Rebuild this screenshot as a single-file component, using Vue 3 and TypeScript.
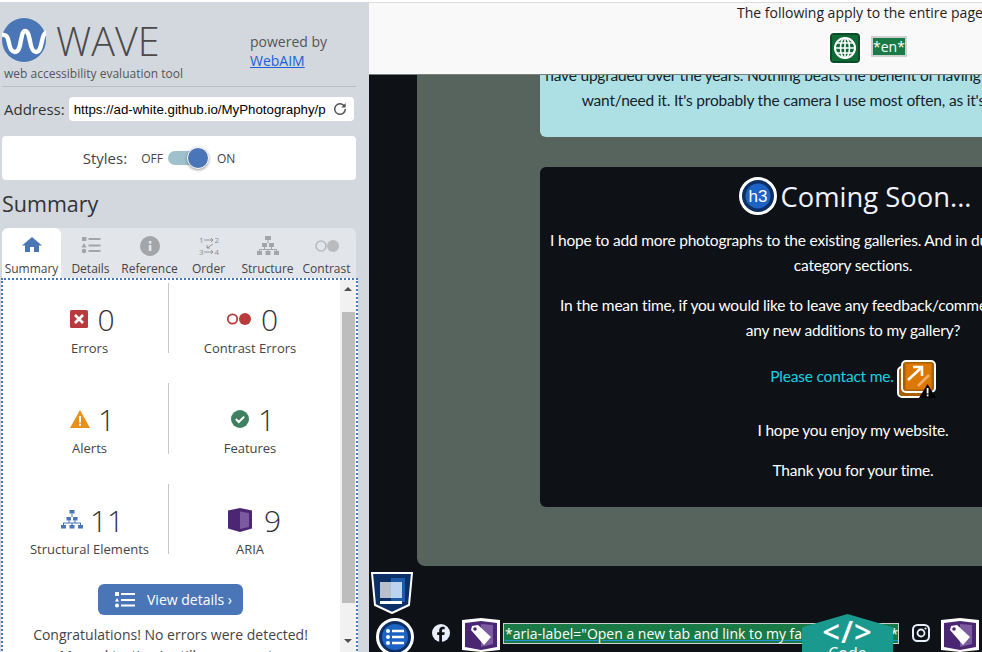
<script setup lang="ts">
const tabs = [
  { label: "Summary", icon: "home" },
  { label: "Details", icon: "list" },
  { label: "Reference", icon: "info" },
  { label: "Order", icon: "order" },
  { label: "Structure", icon: "tree" },
  { label: "Contrast", icon: "contrast" },
];

const stats = [
  { label: "Errors", value: 0, icon: "error" },
  { label: "Contrast Errors", value: 0, icon: "pair" },
  { label: "Alerts", value: 1, icon: "alert" },
  { label: "Features", value: 1, icon: "feature" },
  { label: "Structural Elements", value: 11, icon: "tree" },
  { label: "ARIA", value: 9, icon: "book" },
];

const comingSoon = [
  "I hope to add more photographs to the existing galleries. And in due time, I plan to add more",
  "category sections.",
];
const feedback = [
  "In the mean time, if you would like to leave any feedback/comments, or have requests for",
  "any new additions to my gallery?",
];
</script>

<template>
  <div class="page">
    <aside class="wave">
      <div class="brand">
        <div class="brand-left">
          <div class="logo-row">
            <svg class="logo" viewBox="0 0 44 44">
              <circle cx="22" cy="22" r="22" fill="#4a76b8" />
              <path d="M0 17c5-1 6 3 7 8 1 6 3 9 6 9 4 0 5-6 6-12 1-5 2-9 4-9 3 0 4 5 5 10 1 6 3 11 6 11 4 0 5-6 6-11 1-5 2-8 4-8" fill="none" stroke="#fff" stroke-width="4.4" />
            </svg>
            <span class="wave-name">WAVE</span>
          </div>
          <div class="tagline">web accessibility evaluation tool</div>
        </div>
        <div class="powered">powered by<br /><a href="#">WebAIM</a></div>
      </div>
      <div class="address">
        <label>Address:</label>
        <div class="url">
          <span>https://ad-white.github.io/MyPhotography/p</span>
          <svg class="reload" viewBox="0 0 14 14">
            <path d="M11.6 4.4A5.3 5.3 0 1 0 12.3 7" fill="none" stroke="#555" stroke-width="1.5" />
            <path d="M12.6 1v4.4H8.2z" fill="#555" />
          </svg>
        </div>
      </div>
      <div class="styles-card">
        <span class="styles-label">Styles:</span>
        <span class="small">OFF</span>
        <span class="toggle"><span class="knob"></span></span>
        <span class="small">ON</span>
      </div>
      <h1>Summary</h1>
      <div class="tabs">
        <div v-for="(tab, i) in tabs" :key="tab.label" class="tab" :class="{ active: i === 0 }">
          <svg class="tab-icon" viewBox="0 0 28 20">
            <path v-if="tab.icon === 'home'" d="M14 1 4 9.5h3V16h5v-5h4v5h5V9.5h3z" fill="#4a76b8" />
            <g v-else-if="tab.icon === 'list'" fill="#a3a5a8">
              <rect x="5" y="1" width="4.500" height="4" />
              <path d="M7 7l2.600 4.500H4.400z" />
              <circle cx="7" cy="15" r="2.300" />
              <rect x="11.500" y="2" width="12" height="2" />
              <rect x="11.500" y="8.500" width="12" height="2" />
              <rect x="11.500" y="14" width="12" height="2" />
            </g>
            <g v-else-if="tab.icon === 'info'">
              <circle cx="14" cy="10" r="10" fill="#a3a5a8" />
              <rect x="12.800" y="9" width="2.600" height="6" fill="#e2e5e9" />
              <rect x="12.800" y="5" width="2.600" height="2.600" fill="#e2e5e9" />
            </g>
            <g v-else-if="tab.icon === 'order'" fill="none" stroke="#8c8e91" stroke-width="0.900">
              <text x="4" y="7" class="order-digit">1</text>
              <text x="19.500" y="7" class="order-digit">2</text>
              <text x="4" y="19" class="order-digit">3</text>
              <text x="19.500" y="19" class="order-digit">4</text>
              <path d="M9 4h9m-2-2 2 2-2 2M9 16h9m-2-2 2 2-2 2M18 8l-6 4m0-3v3h3" />
            </g>
            <g v-else-if="tab.icon === 'tree'" fill="#a3a5a8">
              <rect x="11" y="0" width="6" height="4" />
              <rect x="8" y="7" width="5" height="4" />
              <rect x="15" y="7" width="5" height="4" />
              <rect x="3" y="15" width="5" height="4" />
              <rect x="11.500" y="15" width="5" height="4" />
              <rect x="20" y="15" width="5" height="4" />
              <path d="M13.500 4h1v3h-1zM5 13h18v2h-1v-1H6v1H5zM10 11h1v2h-1zM17 11h1v2h-1zM13.500 13h1v2h-1z" />
            </g>
            <g v-else>
              <circle cx="8" cy="10" r="5" fill="none" stroke="#b9bbbe" stroke-width="1.600" />
              <circle cx="20" cy="10" r="6" fill="#b9bbbe" />
            </g>
          </svg>
          <span>{{ tab.label }}</span>
        </div>
      </div>
      <div class="panel">
        <div class="panel-body">
          <div class="stats">
            <div v-for="stat in stats" :key="stat.label" class="stat">
              <div class="stat-main" :class="stat.icon">
                <svg class="stat-icon" viewBox="0 0 26 24">
                  <g v-if="stat.icon === 'error'">
                    <rect x="4" y="3" width="18" height="18" rx="1.500" fill="#b93a3c" />
                    <path d="M9 8l8 8m0-8-8 8" stroke="#fff" stroke-width="2.600" />
                  </g>
                  <g v-else-if="stat.icon === 'pair'">
                    <circle cx="6.500" cy="12" r="4.700" fill="none" stroke="#b93a3c" stroke-width="1.800" />
                    <circle cx="19" cy="12" r="6" fill="#b93a3c" />
                  </g>
                  <g v-else-if="stat.icon === 'alert'">
                    <path d="M13 3 23 21H3z" fill="#e5911c" />
                    <rect x="12" y="9" width="2" height="6.500" fill="#fff" />
                    <rect x="12" y="16.700" width="2" height="2.100" fill="#fff" />
                  </g>
                  <g v-else-if="stat.icon === 'feature'">
                    <circle cx="13" cy="12" r="9" fill="#3f8060" />
                    <path d="M8.800 12l3 3 5.400-5.400" fill="none" stroke="#fff" stroke-width="2" />
                  </g>
                  <g v-else-if="stat.icon === 'tree'" fill="#4a76b8">
                    <rect x="10.500" y="2" width="5" height="3.500" />
                    <rect x="7.500" y="9" width="4.500" height="3.500" />
                    <rect x="14" y="9" width="4.500" height="3.500" />
                    <rect x="2" y="17" width="5" height="3.500" />
                    <rect x="10.500" y="17" width="5" height="3.500" />
                    <rect x="19" y="17" width="5" height="3.500" />
                    <path d="M12.500 5.500h1V9h-1zM4 14.500h18V17h-1v-1.500H5V17H4zM9.500 12.500h1v2h-1zM15.500 12.500h1v2h-1zM12.500 14.500h1V17h-1z" />
                  </g>
                  <g v-else>
                    <path d="M1 2.500 13 0l12 2.500v18L13 24 1 20.500z" fill="#4b2673" />
                    <path d="M13 3.500 22 5v14l-9 2z" fill="#7b5aa0" />
                  </g>
                </svg>
                <span class="number">{{ stat.value }}</span>
              </div>
              <div class="stat-label">{{ stat.label }}</div>
            </div>
          </div>
          <button class="details-btn">
            <svg viewBox="0 0 20 16" width="20" height="16">
              <rect x="0" y="0" width="4" height="4" fill="#fff" />
              <path d="M2 6l2 3.400H0z" fill="#fff" />
              <circle cx="2" cy="13.500" r="2" fill="#fff" />
              <rect x="6" y="1" width="14" height="2" fill="#fff" />
              <rect x="6" y="7" width="14" height="2" fill="#fff" />
              <rect x="6" y="12.500" width="14" height="2" fill="#fff" />
            </svg>
            <span>View details ›</span>
          </button>
          <p class="congrats">Congratulations! No errors were detected!<br />Manual testing is still necessary to</p>
        </div>
        <div class="scrollbar">
          <span class="arrow up"></span>
          <span class="thumb"></span>
          <span class="arrow down"></span>
        </div>
      </div>
    </aside>

    <main class="site">
      <div class="page-notes">
        <div class="notes-title">The following apply to the entire page</div>
        <div class="notes-row">
          <svg class="globe" viewBox="0 0 34 34">
            <rect x="1" y="1" width="32" height="32" rx="5" fill="#0b4d29" stroke="#fff" stroke-width="2" />
            <rect x="4" y="4" width="26" height="26" fill="#0f6a38" />
            <circle cx="17" cy="17" r="10" fill="none" stroke="#fff" stroke-width="2" />
            <ellipse cx="17" cy="17" rx="4.500" ry="10" fill="none" stroke="#fff" stroke-width="1.600" />
            <path d="M17 7v20M7 17h20M8.500 12h17M8.500 22h17" stroke="#fff" stroke-width="1.600" />
          </svg>
          <span class="wave-tag en-tag">*en*</span>
        </div>
      </div>

      <div class="content">
        <section class="sheet">
          <div class="card light">
            <p>have upgraded over the years. Nothing beats the benefit of having a camera on you when you</p>
            <p>want/need it. It's probably the camera I use most often, as it's always in my pocket.</p>
          </div>
          <div class="card dark">
            <h3>
              <svg class="h3-badge" viewBox="0 0 38 38">
                <circle cx="19" cy="19" r="17.500" fill="#0c2f66" stroke="#fff" stroke-width="3" />
                <circle cx="19" cy="19" r="12.500" fill="#1d63c4" />
                <text x="19" y="25" class="h3-text">h3</text>
              </svg>
              Coming Soon...
            </h3>
            <p v-for="line in comingSoon" :key="line">{{ line }}</p>
            <div class="spacer"></div>
            <p v-for="line in feedback" :key="line">{{ line }}</p>
            <div class="contact">
              <a href="#">Please contact me.</a>
              <svg class="external" viewBox="0 0 39 38">
                <rect x="1" y="7" width="30" height="30" rx="4" fill="#a85f00" stroke="#fff" stroke-width="2" />
                <rect x="5" y="1" width="33" height="31" rx="4" fill="#a85f00" stroke="#fff" stroke-width="2" />
                <rect x="8.500" y="3.500" width="26" height="26" fill="#dc7800" />
                <path d="M11 20 24 8M16 7h9v9" fill="none" stroke="#fff" stroke-width="2.500" />
                <path d="M21 26 32 15" stroke="#f0b070" stroke-width="2.500" />
                <path d="M30.500 24 39 38H22z" fill="#000" />
                <rect x="29.700" y="28" width="1.800" height="5.500" fill="#fff" />
                <rect x="29.700" y="34.500" width="1.800" height="1.800" fill="#fff" />
              </svg>
            </div>
            <p class="enjoy">I hope you enjoy my website.</p>
            <p class="thanks">Thank you for your time.</p>
          </div>
        </section>

        <footer class="foot">
          <svg class="list-badge" viewBox="0 0 38 38">
            <circle cx="19" cy="19" r="17.500" fill="#0c2f66" stroke="#fff" stroke-width="3" />
            <circle cx="19" cy="19" r="13" fill="#1d63c4" />
            <circle cx="12" cy="13" r="2" fill="#fff" />
            <circle cx="12" cy="19" r="2" fill="#fff" />
            <circle cx="12" cy="25" r="2" fill="#fff" />
            <path d="M16 13h12M16 19h12M16 25h12" stroke="#fff" stroke-width="2.400" />
          </svg>
          <svg class="social fb" viewBox="0 0 18 18">
            <circle cx="9" cy="9" r="9" fill="#e8eefb" />
            <path d="M10 18v-7h2.300l.4-2.700H10V6.600c0-.8.4-1.300 1.400-1.300h1.300V3c-.5-.1-1.300-.2-2-.2-2.100 0-3.500 1.200-3.500 3.500v2H5.200V11h2v7z" fill="#0e1116" />
          </svg>
          <svg class="tag" viewBox="0 0 38 34">
            <path d="M0 2 19 0l19 2v30l-19 2-19-2z" fill="#fff" />
            <path d="M3 5 19 3l16 2v24l-16 3-16-3z" fill="#4b2673" />
            <path d="M19 6l12 1v19l-12 3z" fill="#7b5aa0" />
            <path d="M9 12l1-4 6-1 13 12-7 8z" fill="#fff" />
            <circle cx="13" cy="11" r="1.800" fill="#4b2673" />
          </svg>
          <span class="wave-tag aria-tag">*aria-label="Open a new tab and link to my facebook page"*</span>
          <svg class="social ig" viewBox="0 0 18 18">
            <rect x="1" y="1" width="16" height="16" rx="4.500" fill="none" stroke="#e8eefb" stroke-width="2" />
            <circle cx="9" cy="9" r="3.500" fill="none" stroke="#e8eefb" stroke-width="1.800" />
            <circle cx="13.500" cy="4.500" r="1.100" fill="#e8eefb" />
          </svg>
          <svg class="tag" viewBox="0 0 38 34">
            <path d="M0 2 19 0l19 2v30l-19 2-19-2z" fill="#fff" />
            <path d="M3 5 19 3l16 2v24l-16 3-16-3z" fill="#4b2673" />
            <path d="M19 6l12 1v19l-12 3z" fill="#7b5aa0" />
            <path d="M9 12l1-4 6-1 13 12-7 8z" fill="#fff" />
            <circle cx="13" cy="11" r="1.800" fill="#4b2673" />
          </svg>
        </footer>

        <svg class="structure-badge" viewBox="0 0 42 42">
          <path d="M1 1h40l-3 32-17 8-17-8z" fill="#0c2f66" stroke="#fff" stroke-width="2" />
          <path d="M20 6h14v24H20z" fill="#1d5ba8" />
          <rect x="9" y="10" width="11" height="16" fill="#b8c0cc" />
          <rect x="20" y="10" width="11" height="16" fill="#bcd3f0" />
          <rect x="9" y="29" width="22" height="3" fill="#fff" />
        </svg>

        <div class="code-badge">
          <span class="code-mark">&lt;/&gt;</span>
          <span class="code-word">Code</span>
        </div>
      </div>
    </main>
  </div>
</template>

<style>
html,
body {
  margin: 0;
  background: #fff;
  overflow: hidden;
}
</style>

<style scoped>
.page {
  display: grid;
  grid-template-columns: 369px 613px;
  height: 652px;
  overflow: hidden;
  font-family: "Open Sans", sans-serif;
  padding-top: 2px;
  box-sizing: border-box;
}

.wave {
  background: #d3d8df;
  padding: 0 0 0 2px;
  height: 650px;
  overflow: hidden;
  color: #333;
}
.brand {
  display: flex;
  width: 354px;
  height: 84px;
  border-bottom: 1px solid #b9bdc1;
  box-sizing: content-box;
}
.brand-left {
  width: 248px;
}
.logo-row {
  display: flex;
  align-items: center;
  height: 60px;
  padding-top: 16px;
  box-sizing: border-box;
}
.logo {
  width: 44px;
  height: 44px;
}
.wave-name {
  font-size: 39.500px;
  font-weight: 300;
  color: #4a4a4a;
  margin: 1px 0 0 10px;
  line-height: 44px;
}
.tagline {
  font-size: 12px;
  color: #555;
  margin: 3px 0 0 2px;
  white-space: nowrap;
}
.powered {
  font-size: 14px;
  line-height: 19px;
  color: #555;
  padding-top: 30px;
}
.powered a {
  color: #1a5fd6;
}
.address {
  display: flex;
  align-items: center;
  height: 24px;
  margin-top: 10px;
  font-size: 15px;
  padding-left: 2px;
}
.url {
  display: flex;
  align-items: center;
  justify-content: space-between;
  margin-left: 4px;
  width: 285px;
  height: 24px;
  padding: 0 7px 0 5px;
  box-sizing: border-box;
  background: #fff;
  border-radius: 4px;
  font-family: "Liberation Sans", sans-serif;
  font-size: 13.300px;
  color: #000;
  white-space: nowrap;
}
.reload {
  width: 14px;
  height: 14px;
  flex: none;
}
.styles-card {
  display: flex;
  align-items: center;
  justify-content: center;
  width: 354px;
  height: 44px;
  margin-top: 15px;
  background: #fff;
  border-radius: 4px;
  padding-right: 40px;
  box-sizing: border-box;
}
.styles-label {
  font-size: 15px;
  margin-right: 14px;
  color: #444;
}
.small {
  font-size: 12px;
  color: #444;
}
.toggle {
  position: relative;
  width: 37px;
  height: 14px;
  margin: 0 12px 0 5px;
  background: #9fc1cc;
  border-radius: 7px;
}
.knob {
  position: absolute;
  right: -4px;
  top: -4.500px;
  width: 20px;
  height: 20px;
  background: #4a76b8;
  border: 1px solid #fff;
  border-radius: 50%;
  box-shadow: 0 1px 3px rgba(0, 0, 0, 0.4);
}
h1 {
  font-size: 21.500px;
  font-weight: 400;
  line-height: 28px;
  margin: 10px 0 0 0;
  color: #333;
}
.tabs {
  display: grid;
  grid-template-columns: repeat(6, 59px);
  width: 354px;
  height: 50px;
  margin-top: 10px;
  background: #e2e5e9;
  border-radius: 6px 6px 0 0;
}
.tab {
  display: flex;
  flex-direction: column;
  align-items: center;
  padding-top: 8px;
  box-sizing: border-box;
  font-size: 12px;
  line-height: 16px;
  color: #444;
  white-space: nowrap;
}
.tab.active {
  background: #fff;
  border-radius: 6px 6px 0 0;
}
.tab-icon {
  width: 28px;
  height: 20px;
  margin-bottom: 5px;
}
.order-digit {
  font-family: "Open Sans", sans-serif;
  font-size: 8px;
  fill: #8c8e91;
  stroke: none;
}
.panel {
  display: flex;
  width: 357px;
  height: 376px;
  margin-left: -1px;
  background: #fff;
  border: 2px dotted #4a76b8;
  box-sizing: border-box;
  overflow: hidden;
}
.panel-body {
  width: 337px;
  padding-top: 3px;
  text-align: center;
  flex: none;
}
.stats {
  display: grid;
  grid-template-columns: 160px 160px;
  grid-template-rows: 70px 71px 70px;
  row-gap: 30px;
  margin-left: 7px;
}
.stat {
  text-align: center;
  padding-top: 16px;
  box-sizing: border-box;
}
.stat:nth-child(odd) {
  border-right: 1px solid #c6c8ca;
  margin-right: 1px;
  padding-left: 1px;
}
.stat-main {
  display: flex;
  align-items: center;
  justify-content: center;
  gap: 5px;
  height: 40px;
}
.stat-main.error {
  padding-left: 2px;
}
.stat-main.pair {
  gap: 9px;
  padding-left: 4px;
}
.stat-main.alert {
  padding-left: 3px;
}
.stat-main.feature {
  padding-left: 2px;
}
.stat-main.tree {
  padding-left: 4px;
}
.stat-main.book {
  gap: 11px;
  padding-left: 8px;
}
.stat-icon {
  width: 26px;
  height: 24px;
}
.number {
  font-size: 30px;
  font-weight: 300;
  color: #333;
}
.stat-label {
  font-size: 13px;
  line-height: 18px;
  color: #444;
  white-space: nowrap;
}
.details-btn {
  display: inline-flex;
  align-items: center;
  gap: 12px;
  width: 145px;
  height: 31px;
  margin: 30px 0 0 -2px;
  padding: 0 0 0 17px;
  background: #4a76b8;
  border: none;
  border-radius: 6px;
  color: #fff;
  font-family: "Open Sans", sans-serif;
  font-size: 14px;
  box-sizing: border-box;
}
.congrats {
  font-size: 14px;
  line-height: 21px;
  margin: 9px 2px 0 0;
  color: #444;
  white-space: nowrap;
}
.scrollbar {
  display: flex;
  flex-direction: column;
  align-items: center;
  width: 16px;
  height: 100%;
  background: #f1f1f1;
  flex: none;
}
.arrow {
  width: 0;
  height: 0;
  border-left: 4px solid transparent;
  border-right: 4px solid transparent;
}
.arrow.up {
  border-bottom: 4px solid #505050;
  margin: 7px 0 21px;
}
.arrow.down {
  border-top: 4px solid #505050;
  margin-top: 36px;
}
.thumb {
  width: 13px;
  height: 291px;
  background: #bdbdbd;
}

.site {
  background: #0e1116;
  height: 650px;
  overflow: hidden;
  font-family: "Lato", sans-serif;
  font-size: 15.500px;
  letter-spacing: -0.2px;
}
.page-notes {
  position: relative;
  z-index: 2;
  width: 613px;
  height: 73px;
  background: #f9f9f9;
  border-top: 1px solid #dcdcdc;
  border-bottom: 1px solid #77807c;
  box-sizing: border-box;
  font-family: "Open Sans", sans-serif;
  letter-spacing: 0;
  color: #222;
}
.notes-title {
  font-size: 14px;
  line-height: 20px;
  padding-left: 368px;
  white-space: nowrap;
}
.notes-row {
  display: flex;
  align-items: center;
  gap: 9px;
  padding: 8px 0 0 459px;
}
.globe {
  width: 34px;
  height: 34px;
}
.wave-tag {
  background: #1a7a45;
  border: 2px solid #cfcfcf;
  color: #fff;
  font-family: "Open Sans", sans-serif;
  font-size: 14px;
  letter-spacing: 0;
  line-height: 17px;
  white-space: nowrap;
}
.en-tag {
  margin-bottom: 3px;
}
.content {
  position: relative;
  height: 577px;
}
.sheet {
  width: 800px;
  height: 491px;
  margin-left: 48px;
  background: #56645d;
  border-radius: 0 0 0 8px;
  padding-left: 123px;
  box-sizing: border-box;
}
.card {
  width: 626px;
  box-sizing: border-box;
  text-align: center;
  border-radius: 6px;
}
.card p {
  margin: 0;
  line-height: 25px;
  white-space: nowrap;
}
.light {
  height: 62px;
  background: #ade0e4;
  color: #15222a;
  border-radius: 0 0 0 6px;
}
.light p {
  position: relative;
  top: -12px;
}
.dark {
  height: 340px;
  margin-top: 30px;
  background: #0e1116;
  color: #fff;
  padding-top: 10px;
}
h3 {
  display: flex;
  align-items: center;
  justify-content: center;
  gap: 3px;
  height: 38px;
  margin: 0 0 13px 5px;
  font-family: "Open Sans", sans-serif;
  font-size: 27.400px;
  font-weight: 400;
  letter-spacing: 0;
  color: #f0f3ff;
}
.h3-badge {
  width: 38px;
  height: 38px;
}
.h3-text {
  font-family: "Liberation Sans", sans-serif;
  font-size: 17px;
  fill: #fff;
  text-anchor: middle;
}
.spacer {
  height: 15px;
}
.contact {
  display: flex;
  align-items: center;
  justify-content: center;
  height: 38px;
  margin-top: 17px;
  gap: 3px;
}
.contact a {
  color: #17d2e0;
  text-decoration: none;
  margin-bottom: 6px;
}
.external {
  width: 39px;
  height: 38px;
}
.card .enjoy {
  margin-top: 20px;
}
.card .thanks {
  margin-top: 15px;
}
.foot {
  position: relative;
  display: flex;
  align-items: center;
  width: 613px;
  height: 34px;
  margin-top: 52px;
  padding-left: 7px;
  box-sizing: border-box;
}
.list-badge {
  width: 38px;
  height: 38px;
  flex: none;
  margin-top: 4px;
}
.social {
  width: 18px;
  height: 18px;
  flex: none;
  margin-bottom: 4px;
}
.fb {
  margin-left: 18px;
}
.tag {
  width: 38px;
  height: 34px;
  flex: none;
}
.fb + .tag {
  margin-left: 12px;
}
.aria-tag {
  display: block;
  flex: none;
  width: 396px;
  height: 21px;
  margin: 0 0 4px 3px;
  box-sizing: border-box;
  line-height: 19px;
  overflow: hidden;
  text-decoration: underline;
  text-decoration-color: #2a8fd8;
  padding-left: 1px;
  border-width: 1px;
}
.ig {
  margin-left: 13px;
}
.ig + .tag {
  margin-left: 11px;
}
.structure-badge {
  position: absolute;
  left: 2px;
  top: 497px;
  width: 42px;
  height: 42px;
}
.code-badge {
  position: absolute;
  left: 433px;
  top: 539px;
  width: 91px;
  height: 60px;
  display: flex;
  flex-direction: column;
  align-items: center;
  background: #1a9a8e;
  clip-path: polygon(50% 0, 100% 22%, 100% 100%, 0 100%, 0 22%);
  color: #fff;
  font-family: "Open Sans", sans-serif;
  letter-spacing: 0;
}
.code-mark {
  font-size: 31px;
  line-height: 30px;
  letter-spacing: 1px;
  margin-top: 2px;
  font-weight: 600;
}
.code-word {
  font-size: 16px;
  line-height: 18px;
  margin-top: -2px;
}
</style>
